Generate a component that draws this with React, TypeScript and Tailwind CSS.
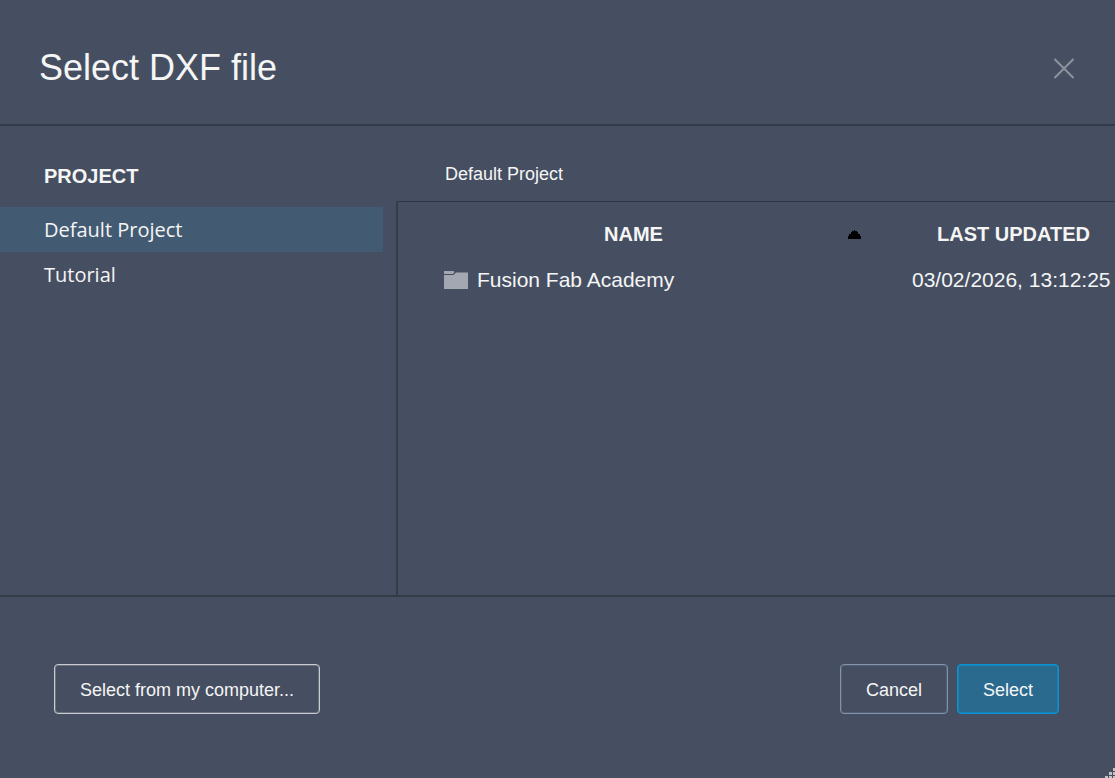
import React, { useState } from 'react';

interface FileEntry {
  name: string;
  updated: string;
}

const projects = ['Default Project', 'Tutorial'];

const files: Record<string, FileEntry[]> = {
  'Default Project': [{ name: 'Fusion Fab Academy', updated: '03/02/2026, 13:12:25' }],
  Tutorial: [],
};

const CloseIcon = () => (
  <svg width="22" height="22" viewBox="0 0 22 22" fill="none" stroke="#8d939f" strokeWidth="2" aria-hidden="true">
    <path d="M1.500 2l19 19M20.500 2l-19 19" />
  </svg>
);

const FolderIcon = () => (
  <svg width="24" height="18" viewBox="0 0 24 18" aria-hidden="true">
    <path d="M0 0h9.500l1 1-1.500 2H0z" fill="#a3a7b1" />
    <path d="M0 4h9.500l2-2H24v16H0z" fill="#a3a7b1" />
    <path d="M12 1h12v1H11.500z" fill="#747b89" />
  </svg>
);

const SortIcon = () => (
  <svg width="13" height="9" viewBox="0 0 13 9" aria-hidden="true">
    <path d="M6 0h1v1h2v1h1v2h2v2h1v3H0V6h1V4h2V2h1V1h2z" fill="#000" />
  </svg>
);

const ResizeGrip = () => (
  <svg className="absolute right-0 bottom-0" width="10" height="10" viewBox="0 0 10 10" fill="#c3c3c3" aria-hidden="true">
    <path d="M8 0h3v3H8zM4 4h3v3H4zM8 4h3v3H8zM0 8h3v3H0zM4 8h3v3H4zM8 8h3v3H8z" />
  </svg>
);

export default function App() {
  const [project, setProject] = useState(projects[0]);

  return (
    <div className="relative flex min-h-screen flex-col overflow-hidden bg-[#454f61] font-['Liberation_Sans',Arial,sans-serif] text-[#f5f5f5]">
      {/* Title bar */}
      <header className="flex items-center justify-between border-b-2 border-[#323b48] pt-11 pr-10 pb-8 pl-[39px]">
        <h1 className="text-4xl leading-12">Select DXF file</h1>
        <button type="button" aria-label="Close" className="cursor-pointer">
          <CloseIcon />
        </button>
      </header>

      <main className="flex flex-1">
        {/* Project list */}
        <nav className="w-[396px] shrink-0 pt-[35px] pr-[13px]">
          <h2 className="pl-11 text-xl leading-[30px] font-bold">PROJECT</h2>
          <ul className="mt-4 font-['Open_Sans',sans-serif] text-xl">
            {projects.map((name) => (
              <li key={name}>
                <button
                  type="button"
                  onClick={() => setProject(name)}
                  className={`h-[45px] w-full cursor-pointer pl-11 text-left ${
                    name === project ? 'bg-[#435b72]' : 'hover:bg-[#4b566a]'
                  }`}
                >
                  {name}
                </button>
              </li>
            ))}
          </ul>
        </nav>

        <section className="flex min-w-0 flex-1 flex-col">
          <p className="pt-9 pb-[15px] pl-[49px] text-lg leading-6">{project}</p>
          <div className="flex-1 border-t border-l-2 border-t-[#2f3744] border-l-[#343c48] pt-[9px]">
            <table className="w-full border-collapse">
              <thead>
                <tr className="h-[46px] text-xl">
                  <th className="relative font-bold">
                    NAME
                    <span className="absolute inset-y-0 right-2 flex items-center">
                      <SortIcon />
                    </span>
                  </th>
                  <th className="w-[246px] pl-[43px] font-bold whitespace-nowrap">LAST UPDATED</th>
                </tr>
              </thead>
              <tbody>
                {files[project].map((file) => (
                  <tr key={file.name} className="h-[46px] text-[21px]">
                    <td className="pl-[46px]">
                      <span className="flex items-center gap-[9px]">
                        <FolderIcon />
                        {file.name}
                      </span>
                    </td>
                    <td className="pl-[43px] whitespace-nowrap">{file.updated}</td>
                  </tr>
                ))}
              </tbody>
            </table>
          </div>
        </section>
      </main>

      {/* Actions */}
      <footer className="flex items-center justify-between border-t-2 border-[#323b48] pt-[67px] pr-14 pb-16 pl-[54px] text-lg">
        <button
          type="button"
          className="h-[50px] cursor-pointer rounded border border-[#c9cbd0] px-[25px] pt-px shadow-[inset_0_0_0_1px_#6b7382]"
        >
          Select from my computer...
        </button>
        <div className="flex gap-[9px]">
          <button
            type="button"
            className="h-[50px] cursor-pointer rounded border border-[#8493ab] px-[25px] pt-px shadow-[inset_0_0_0_1px_#536074]"
          >
            Cancel
          </button>
          <button
            type="button"
            className="h-[50px] cursor-pointer rounded border border-[#0696d7] bg-[#2b6a8f] px-[25px] pt-px shadow-[inset_0_0_0_1px_#1a7fb3]"
          >
            Select
          </button>
        </div>
      </footer>
      <ResizeGrip />
    </div>
  );
}
